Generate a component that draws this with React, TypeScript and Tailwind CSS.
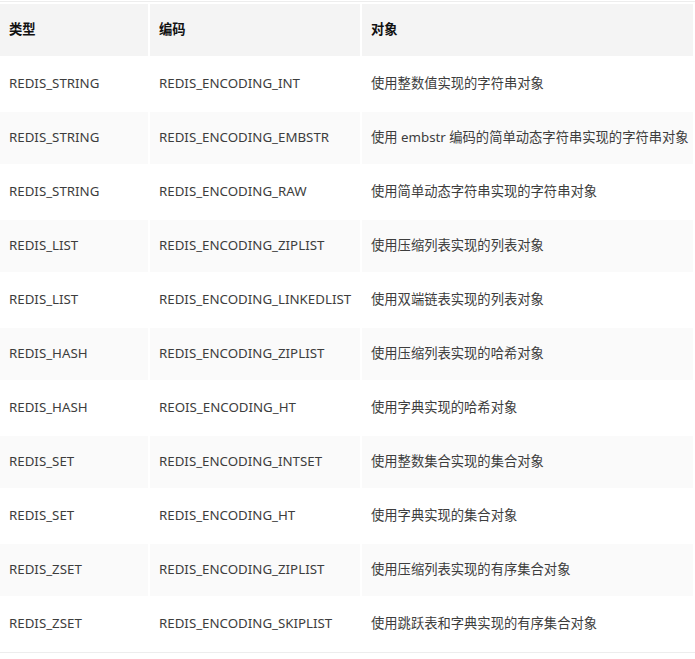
import React from 'react';

const rows: [string, string, string][] = [
    ['REDIS_STRING', 'REDIS_ENCODING_INT', '使用整数值实现的字符串对象'],
    ['REDIS_STRING', 'REDIS_ENCODING_EMBSTR', '使用 embstr 编码的简单动态字符串实现的字符串对象'],
    ['REDIS_STRING', 'REDIS_ENCODING_RAW', '使用简单动态字符串实现的字符串对象'],
    ['REDIS_LIST', 'REDIS_ENCODING_ZIPLIST', '使用压缩列表实现的列表对象'],
    ['REDIS_LIST', 'REDIS_ENCODING_LINKEDLIST', '使用双端链表实现的列表对象'],
    ['REDIS_HASH', 'REDIS_ENCODING_ZIPLIST', '使用压缩列表实现的哈希对象'],
    ['REDIS_HASH', 'REOIS_ENCODING_HT', '使用字典实现的哈希对象'],
    ['REDIS_SET', 'REDIS_ENCODING_INTSET', '使用整数集合实现的集合对象'],
    ['REDIS_SET', 'REDIS_ENCODING_HT', '使用字典实现的集合对象'],
    ['REDIS_ZSET', 'REDIS_ENCODING_ZIPLIST', '使用压缩列表实现的有序集合对象'],
    ['REDIS_ZSET', 'REDIS_ENCODING_SKIPLIST', '使用跳跃表和字典实现的有序集合对象'],
];

const App: React.FC = () => (
    <div
        className="w-[695px] h-[659px] bg-white pt-[1px] overflow-hidden"
        style={{ fontFamily: '"Noto Sans", "Noto Sans CJK SC", sans-serif' }}
    >
        <table className="table-fixed w-[697px] border-separate border-spacing-[2px] border-t border-b border-[#ededed] text-[13.3px] text-[#3d3d3d] -mx-[2px]">
            <colgroup>
                <col className="w-[148px]" />
                <col className="w-[210px]" />
                <col />
            </colgroup>
            <thead>
                <tr className="h-[52px]">
                    <th className="bg-[#f4f4f4] text-left font-bold text-[#111] px-[9px]">类型</th>
                    <th className="bg-[#f4f4f4] text-left font-bold text-[#111] px-[9px]">编码</th>
                    <th className="bg-[#f4f4f4] text-left font-bold text-[#111] px-[9px]">对象</th>
                </tr>
            </thead>
            <tbody>
                {rows.map((r, i) => (
                    <tr key={i} className={i % 2 === 1 ? 'h-[52px] bg-[#fafafa]' : 'h-[52px]'}>
                        <td className="px-[9px] whitespace-nowrap">{r[0]}</td>
                        <td className="px-[9px] whitespace-nowrap">{r[1]}</td>
                        <td className="px-[9px] whitespace-nowrap">{r[2]}</td>
                    </tr>
                ))}
            </tbody>
        </table>
    </div>
);

export default App;
